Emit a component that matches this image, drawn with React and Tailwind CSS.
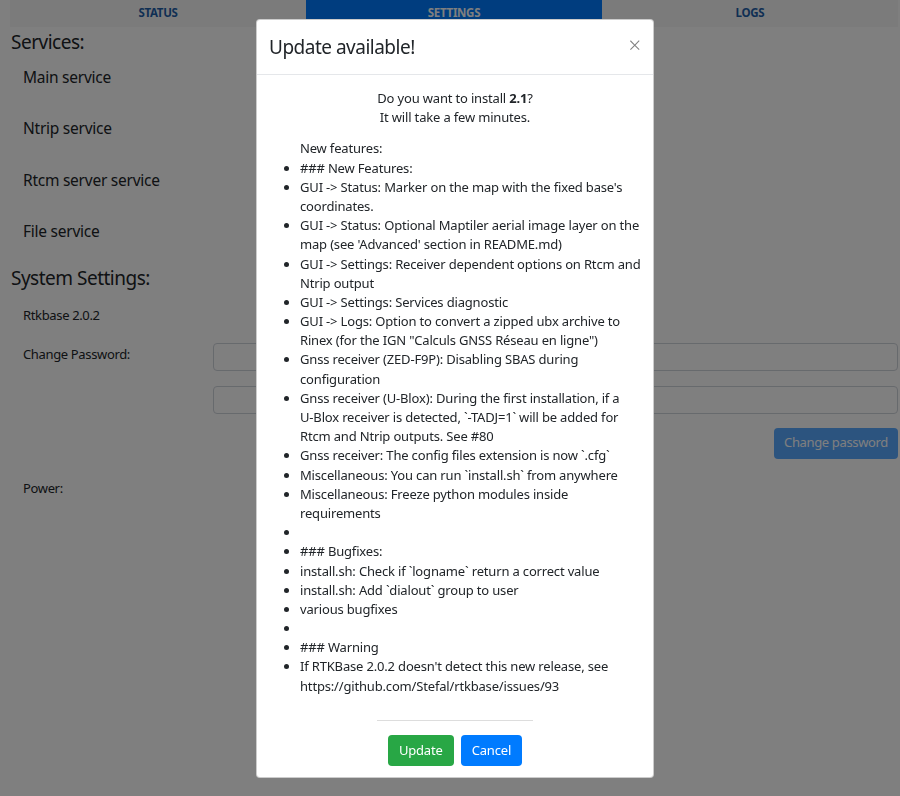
import React from 'react';

const features = [
  '### New Features:',
  "GUI -> Status: Marker on the map with the fixed base's coordinates.",
  "GUI -> Status: Optional Maptiler aerial image layer on the map (see 'Advanced' section in README.md)",
  'GUI -> Settings: Receiver dependent options on Rtcm and Ntrip output',
  'GUI -> Settings: Services diagnostic',
  'GUI -> Logs: Option to convert a zipped ubx archive to Rinex (for the IGN "Calculs GNSS Réseau en ligne")',
  'Gnss receiver (ZED-F9P): Disabling SBAS during configuration',
  <>
    Gnss receiver (U-Blox): During the first installation, if a <span className="whitespace-nowrap">U-Blox</span> receiver is
    detected, `-TADJ=1` will be added for Rtcm and Ntrip outputs. See #80
  </>,
  'Gnss receiver: The config files extension is now `.cfg`',
  'Miscellaneous: You can run `install.sh` from anywhere',
  'Miscellaneous: Freeze python modules inside requirements',
  '',
  '### Bugfixes:',
  'install.sh: Check if `logname` return a correct value',
  'install.sh: Add `dialout` group to user',
  'various bugfixes',
  '',
  '### Warning',
  "If RTKBase 2.0.2 doesn't detect this new release, see https://github.com/Stefal/rtkbase/issues/93",
];

const services = ['Main service', 'Ntrip service', 'Rtcm server service', 'File service'];

function SettingsPage() {
  return (
    <div className="pl-[10px] pr-[2px] text-[#212529]">
      {/* tabs */}
      <div className="grid grid-cols-3 h-[27px] bg-[#f6f6f6] text-[11.5px] font-bold tracking-[-0.3px]">
        <div className="flex justify-center pt-[4px] text-[#1f5fa8]">STATUS</div>
        <div className="flex justify-center pt-[4px] text-white bg-[#007bff] h-[19px]">SETTINGS</div>
        <div className="flex justify-center pt-[4px] text-[#1f5fa8]">LOGS</div>
      </div>

      <h4 className="text-[19px] tracking-[-0.5px] leading-[24px] mt-[3px] pl-[1px]">Services:</h4>
      <div className="flex flex-col pl-[13px] mt-[11px] text-[15.5px] tracking-[-0.25px] leading-[24px]">
        {services.map((s) => (
          <div key={s} className="h-[51.3px]">{s}</div>
        ))}
      </div>

      <h4 className="text-[19px] tracking-[-0.5px] leading-[24px] -mt-[4px] pl-[1px]">System Settings:</h4>
      <div className="pl-[13px] text-[13px] tracking-[-0.35px] leading-[19.5px]">
        <div className="mt-[16px]">Rtkbase 2.0.2</div>
        <div className="grid grid-cols-[190px_1fr] mt-[19px]">
          <div>Change Password:</div>
          <div className="flex flex-col gap-[15px] -mt-[2px]">
            <input type="password" className="h-[28px] rounded-[4px] border border-[#ced4da] bg-white" />
            <input type="password" className="h-[28px] rounded-[4px] border border-[#ced4da] bg-white" />
            <div className="flex justify-end -mt-[1px]">
              <button className="h-[31px] px-[10px] rounded-[4px] bg-[#007bff] opacity-65 text-white">Change password</button>
            </div>
          </div>
        </div>
        <div className="mt-[20px]">Power:</div>
      </div>
    </div>
  );
}

function UpdateModal() {
  return (
    <div className="fixed inset-0 bg-black/50 pl-[256px] pt-[19px]">
      <div className="w-[398px] h-[759px] bg-white rounded-[4px] border border-black/20 flex flex-col text-[#212529]">
        <div className="shrink-0 flex items-center justify-between h-[55px] px-[12px] border-b border-[#e5e7ea]">
          <h5 className="text-[19px] tracking-[-0.5px] leading-[24px]">Update available!</h5>
          <button className="text-[22px] font-light text-black/50 leading-none pr-[0px] -mt-[6px]">×</button>
        </div>
        <div className="flex-1 flex flex-col items-center pt-[14px] pb-[11px] text-[13px] tracking-[-0.17px] leading-[19.18px]">
          <p className="text-center">Do you want to install <b>2.1</b>?<br />It will take a few minutes.</p>
          <div className="w-[344px] ml-[34px] mt-[12px]">
            <div>New features:</div>
            <ul className="list-disc list-outside pl-0">
              {features.map((f, i) => (
                <li key={i} className="min-h-[19.18px]">{f}</li>
              ))}
            </ul>
          </div>
          <hr className="w-[156px] mt-auto border-[#ddd]" />
          <div className="flex gap-[7px] mt-[14px]">
            <button className="h-[31px] px-[11px] rounded-[4px] bg-[#28a745] text-white">Update</button>
            <button className="h-[31px] px-[11px] rounded-[4px] bg-[#007bff] text-white">Cancel</button>
          </div>
        </div>
      </div>
    </div>
  );
}

export default function App() {
  return (
    <div className="relative min-h-[796px] bg-white font-['Noto_Sans',sans-serif]">
      <SettingsPage />
      <UpdateModal />
    </div>
  );
}
